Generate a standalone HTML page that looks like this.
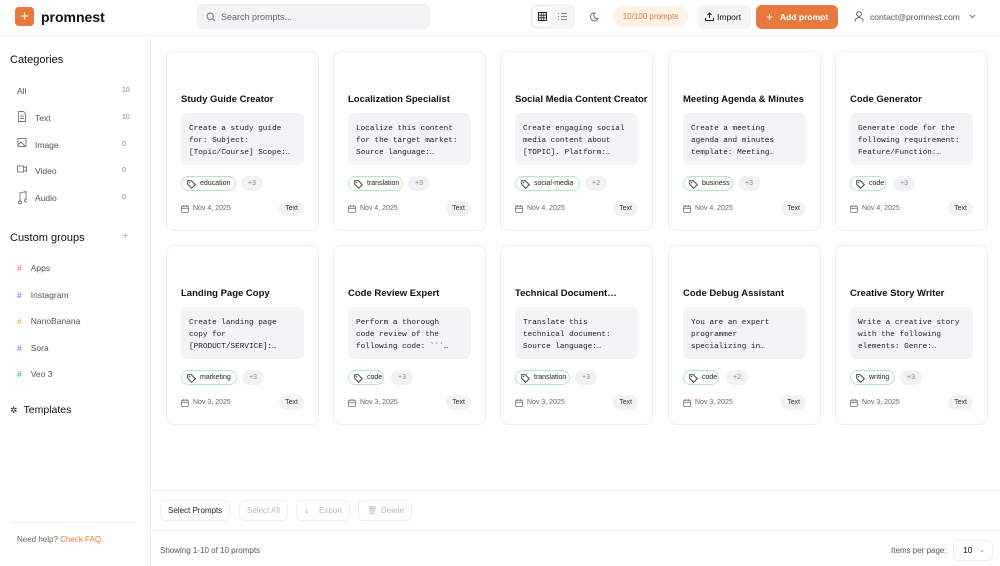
<!DOCTYPE html>
<html><head><meta charset="utf-8"><style>
*{box-sizing:border-box;margin:0;padding:0}
body{width:1000px;height:566px;overflow:hidden;font-family:"Liberation Sans",sans-serif;background:#fff;color:#111;position:relative}
.hdr{position:absolute;left:0;top:0;width:1000px;height:36px;border-bottom:1px solid #eee}
.logo{position:absolute;left:15px;top:7px;width:19px;height:19px;background:#e8793d;border-radius:4px;color:#fff;text-align:center;font-size:15px;line-height:19px}
.brand{position:absolute;left:41px;top:9px;font-weight:bold;font-size:14px}
.search{position:absolute;left:197px;top:4px;width:233px;height:25px;background:#f2f3f5;border-radius:6px;border:1px solid #eceef1;font-size:9px;color:#666;padding:7px 0 0 23px}
.abs{position:absolute}
.side{position:absolute;left:0;top:37px;width:151px;height:529px;border-right:1px solid #eee}
.sh{position:absolute;left:10px;font-size:11px;color:#111}
.si{position:absolute;left:17px;font-size:8.5px;color:#555}
.cnt{position:absolute;left:122px;font-size:7px;color:#888}
.card{position:absolute;width:153px;height:180px;border:1px solid #eee;border-radius:8px;background:#fff}
.card .t{position:absolute;left:14px;top:42px;font-size:9.5px;font-weight:bold;color:#111;white-space:nowrap}
.card .c{position:absolute;left:14px;top:61px;width:123px;height:52px;background:#f3f4f6;border-radius:6px;font-family:"Liberation Mono",monospace;font-size:7.7px;line-height:12px;padding:10px 8px 0;color:#222;white-space:pre;overflow:hidden}
.tag{position:absolute;left:14px;top:124px;height:15px;border:1px solid #b9e3c3;border-radius:8px;font-size:7px;padding:0 0 0 18px;line-height:13px;color:#222}
.tag svg{position:absolute;left:5px;top:3px}
.more{position:absolute;top:124px;height:15px;width:22px;background:#f1f2f4;border-radius:8px;font-size:7px;color:#888;text-align:center;line-height:15px}
.date{position:absolute;left:14px;top:153px;font-size:7px;color:#666;padding-left:12px}
.date svg{position:absolute;left:0;top:0}
.ty{position:absolute;right:14px;top:149px;height:15px;padding:0 6px;background:#f1f2f4;border-radius:8px;font-size:7px;line-height:15px;color:#333}
.btn{position:absolute;top:500px;height:21px;border:1px solid #eee;border-radius:5px;font-size:8px;line-height:19px;padding:0 7px}
</style></head><body>
<svg width="0" height="0" style="position:absolute"><defs>
<symbol id="tg" viewBox="0 0 9 9"><path d="M.7.7h3.6l4 4-3.6 3.6-4-4z" fill="none" stroke="#333" stroke-width=".9"/><circle cx="2.6" cy="2.6" r=".6" fill="#333"/></symbol>
<symbol id="cal" viewBox="0 0 8 8"><rect x=".5" y="1.2" width="7" height="6.3" rx="1" fill="none" stroke="#777" stroke-width=".8"/><path d="M.5 3.3h7M2.3 0v2M5.7 0v2" stroke="#777" stroke-width=".8"/></symbol>
</defs></svg>
<div class="hdr">
<div class="logo">+</div><div class="brand">promnest</div>
<div class="search">Search prompts...<svg class="abs" style="left:8px;top:7px" width="10" height="10" viewBox="0 0 10 10"><circle cx="4.2" cy="4.2" r="3.2" fill="none" stroke="#777" stroke-width="1"/><path d="M6.6 6.6L9 9" stroke="#777"/></svg></div>
<div class="abs" style="left:530px;top:4px;width:45px;height:25px;background:#f3f4f6;border-radius:6px"></div>
<div class="abs" style="left:533px;top:7px;width:19px;height:19px;background:#fff;border-radius:4px"></div>
<svg class="abs" style="left:538px;top:12px" width="9" height="9" viewBox="0 0 9 9"><rect x=".5" y=".5" width="8" height="8" fill="none" stroke="#222"/><path d="M3.2 0v9M5.8 0v9M0 3.2h9M0 5.8h9" stroke="#222" stroke-width=".8"/></svg>
<svg class="abs" style="left:558px;top:12px" width="9" height="9" viewBox="0 0 9 9"><path d="M0 1.5h1M0 4.5h1M0 7.5h1M3 1.5h6M3 4.5h6M3 7.5h6" stroke="#888" stroke-width=".9"/></svg>
<svg class="abs" style="left:589px;top:12px" width="10" height="10" viewBox="0 0 10 10"><path d="M6 1a4 4 0 1 0 3 5.5A3.2 3.2 0 0 1 6 1z" fill="none" stroke="#777"/></svg>
<div class="abs" style="left:613px;top:6px;width:75px;height:21px;background:#fdf1e8;border-radius:11px;font-size:8px;color:#e8793d;text-align:center;line-height:21px">10/100 prompts</div>
<div class="abs" style="left:698px;top:5px;width:53px;height:24px;background:#f3f4f6;border-radius:6px;font-size:8.5px;line-height:24px;padding-left:19px">Import<svg class="abs" style="left:7px;top:7px" width="9" height="9" viewBox="0 0 9 9"><path d="M4.5 6V1M2.5 3l2-2 2 2M.5 6v2.5h8V6" fill="none" stroke="#222"/></svg></div>
<div class="abs" style="left:756px;top:5px;width:82px;height:24px;background:#e8793d;border-radius:6px;font-size:8.5px;color:#fff;line-height:24px;padding-left:24px;font-weight:bold">Add prompt<span class="abs" style="left:10px;top:0;font-size:12px;font-weight:normal">+</span></div>
<svg class="abs" style="left:854px;top:11px" width="10" height="11" viewBox="0 0 10 11"><circle cx="5" cy="3" r="2.4" fill="none" stroke="#666"/><path d="M.8 10.5a4.2 4 0 0 1 8.4 0" fill="none" stroke="#666"/></svg>
<div class="abs" style="left:870px;top:12px;font-size:8.5px;color:#555">contact@promnest.com</div>
<svg class="abs" style="left:969px;top:14px" width="7" height="5" viewBox="0 0 7 5"><path d="M1 1l2.5 2.5L6 1" fill="none" stroke="#777"/></svg>
</div>
<div class="side">
<div class="sh" style="top:17px">Categories</div>
<div class="si" style="top:49px">All</div><div class="cnt" style="top:50px">10</div>
<div class="si" style="top:76px;padding-left:18px">Text</div><div class="cnt" style="top:77px">10</div>
<div class="si" style="top:103px;padding-left:18px">Image</div><div class="cnt" style="top:104px">0</div>
<div class="si" style="top:129px;padding-left:18px">Video</div><div class="cnt" style="top:130px">0</div>
<div class="si" style="top:156px;padding-left:18px">Audio</div><div class="cnt" style="top:157px">0</div>
<svg class="abs" style="left:17px;top:74px" width="10" height="110" viewBox="0 0 10 110" fill="none" stroke="#777" stroke-width=".9"><path d="M1.5.5h5l2 2v8h-7z M3 5h4M3 7.5h4"/><rect x="1" y="27.5" width="8" height="8"/><path d="M1 34l3-3 4 4"/><rect x=".5" y="55" width="6" height="6"/><path d="M6.5 57l3-1.5v5l-3-1.5"/><path d="M3 90V82l6-1.5V88M3 90a1.5 1.5 0 1 1-.1 0M9 88a1.5 1.5 0 1 1-.1 0"/></svg>
<div class="sh" style="top:195px">Custom groups</div><div class="abs" style="left:122px;top:193px;color:#aaa;font-size:11px">+</div>
<div class="si" style="top:226px"><span style="color:#e8793d;margin-right:9px">#</span>Apps</div>
<div class="si" style="top:253px"><span style="color:#8b5cf6;margin-right:9px">#</span>Instagram</div>
<div class="si" style="top:279px"><span style="color:#eba23a;margin-right:9px">#</span>NanoBanana</div>
<div class="si" style="top:306px"><span style="color:#3b82f6;margin-right:9px">#</span>Sora</div>
<div class="si" style="top:332px"><span style="color:#10b981;margin-right:9px">#</span>Veo 3</div>
<div class="sh" style="top:367px;left:10px;font-size:10.5px"><span style="font-size:9px;margin-right:6px">✲</span>Templates</div>
<div class="abs" style="left:10px;top:485px;width:126px;border-top:1px solid #eee"></div>
<div class="abs" style="left:17px;top:498px;font-size:8px;color:#666">Need help? <span style="color:#e8793d">Check FAQ</span></div>
</div>

<div class="card" style="left:166px;top:51px"><div class="t">Study Guide Creator</div><div class="c">Create a study guide
for: Subject:
[Topic/Course] Scope:…</div><div class="tag" style="width:55px"><svg width="9" height="9"><use href="#tg"/></svg>education</div><div class="more" style="left:74px">+3</div><div class="date"><svg width="8" height="8"><use href="#cal"/></svg>Nov 4, 2025</div><div class="ty">Text</div></div>

<div class="card" style="left:333px;top:51px"><div class="t">Localization Specialist</div><div class="c">Localize this content
for the target market:
Source language:…</div><div class="tag" style="width:55px"><svg width="9" height="9"><use href="#tg"/></svg>translation</div><div class="more" style="left:74px">+3</div><div class="date"><svg width="8" height="8"><use href="#cal"/></svg>Nov 4, 2025</div><div class="ty">Text</div></div>

<div class="card" style="left:500px;top:51px"><div class="t">Social Media Content Creator</div><div class="c">Create engaging social
media content about
[TOPIC]. Platform:…</div><div class="tag" style="width:65px"><svg width="9" height="9"><use href="#tg"/></svg>social-media</div><div class="more" style="left:84px">+2</div><div class="date"><svg width="8" height="8"><use href="#cal"/></svg>Nov 4, 2025</div><div class="ty">Text</div></div>

<div class="card" style="left:668px;top:51px"><div class="t">Meeting Agenda &amp; Minutes</div><div class="c">Create a meeting
agenda and minutes
template: Meeting…</div><div class="tag" style="width:50px"><svg width="9" height="9"><use href="#tg"/></svg>business</div><div class="more" style="left:69px">+3</div><div class="date"><svg width="8" height="8"><use href="#cal"/></svg>Nov 4, 2025</div><div class="ty">Text</div></div>

<div class="card" style="left:835px;top:51px"><div class="t">Code Generator</div><div class="c">Generate code for the
following requirement:
Feature/Function:…</div><div class="tag" style="width:36px"><svg width="9" height="9"><use href="#tg"/></svg>code</div><div class="more" style="left:57px">+3</div><div class="date"><svg width="8" height="8"><use href="#cal"/></svg>Nov 4, 2025</div><div class="ty">Text</div></div>

<div class="card" style="left:166px;top:245px"><div class="t">Landing Page Copy</div><div class="c">Create landing page
copy for
[PRODUCT/SERVICE]:…</div><div class="tag" style="width:56px"><svg width="9" height="9"><use href="#tg"/></svg>marketing</div><div class="more" style="left:75px">+3</div><div class="date"><svg width="8" height="8"><use href="#cal"/></svg>Nov 3, 2025</div><div class="ty">Text</div></div>

<div class="card" style="left:333px;top:245px"><div class="t">Code Review Expert</div><div class="c">Perform a thorough
code review of the
following code: &#96;&#96;&#96;…</div><div class="tag" style="width:36px"><svg width="9" height="9"><use href="#tg"/></svg>code</div><div class="more" style="left:57px">+3</div><div class="date"><svg width="8" height="8"><use href="#cal"/></svg>Nov 3, 2025</div><div class="ty">Text</div></div>

<div class="card" style="left:500px;top:245px"><div class="t">Technical Document…</div><div class="c">Translate this
technical document:
Source language:…</div><div class="tag" style="width:55px"><svg width="9" height="9"><use href="#tg"/></svg>translation</div><div class="more" style="left:74px">+3</div><div class="date"><svg width="8" height="8"><use href="#cal"/></svg>Nov 3, 2025</div><div class="ty">Text</div></div>

<div class="card" style="left:668px;top:245px"><div class="t">Code Debug Assistant</div><div class="c">You are an expert
programmer
specializing in…</div><div class="tag" style="width:36px"><svg width="9" height="9"><use href="#tg"/></svg>code</div><div class="more" style="left:57px">+2</div><div class="date"><svg width="8" height="8"><use href="#cal"/></svg>Nov 3, 2025</div><div class="ty">Text</div></div>

<div class="card" style="left:835px;top:245px"><div class="t">Creative Story Writer</div><div class="c">Write a creative story
with the following
elements: Genre:…</div><div class="tag" style="width:45px"><svg width="9" height="9"><use href="#tg"/></svg>writing</div><div class="more" style="left:64px">+3</div><div class="date"><svg width="8" height="8"><use href="#cal"/></svg>Nov 3, 2025</div><div class="ty">Text</div></div>

<div class="abs" style="left:151px;top:490px;width:849px;border-top:1px solid #eee"></div>
<div class="btn" style="left:160px;color:#222">Select Prompts</div>
<div class="btn" style="left:239px;color:#bbb">Select All</div>
<div class="btn" style="left:296px;color:#bbb;padding-left:22px">Export<span class="abs" style="left:8px;top:0">⤓</span></div>
<div class="btn" style="left:358px;color:#bbb;padding-left:22px">Delete<span class="abs" style="left:8px;top:0">🗑</span></div>
<div class="abs" style="left:151px;top:530px;width:849px;border-top:1px solid #eee"></div>
<div class="abs" style="left:160px;top:546px;font-size:8px;color:#555">Showing 1-10 of 10 prompts</div>
<div class="abs" style="left:891px;top:546px;font-size:8px;color:#555">Items per page:</div>
<div class="abs" style="left:953px;top:540px;width:40px;height:21px;border:1px solid #eee;border-radius:5px;font-size:8.5px;line-height:19px;padding-left:9px">10<span class="abs" style="left:25px;top:0;font-size:7px;color:#777">⌄</span></div>
</body></html>
